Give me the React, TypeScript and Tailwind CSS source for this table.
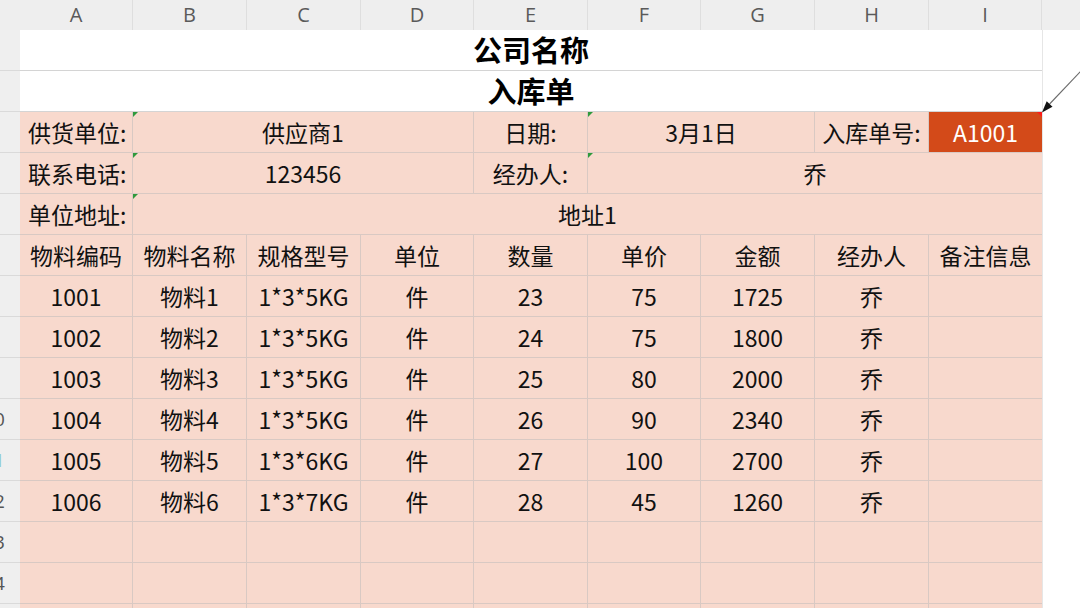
import React from "react";

const W = ["w-[113px]", "w-[114px]", "w-[114px]", "w-[113px]", "w-[114px]", "w-[113px]", "w-[114px]", "w-[114px]", "w-[113px]"];
const LETTERS = ["A", "B", "C", "D", "E", "F", "G", "H", "I"];

const SPAN: Record<number, string> = {
  1: "col-span-1",
  2: "col-span-2",
  3: "col-span-3",
  4: "col-span-4",
  8: "col-span-8",
  9: "col-span-9",
};

function Cell({
  span = 1,
  last = false,
  left = false,
  green = false,
  className = "",
  children,
}: {
  span?: number;
  last?: boolean;
  left?: boolean;
  green?: boolean;
  className?: string;
  children?: React.ReactNode;
}) {
  return (
    <div
      className={`${SPAN[span]} relative flex items-center ${left ? "justify-start pl-[8px]" : "justify-center"} border-b border-[#d9c9c3] ${last ? "" : "border-r"} bg-[#f8d9cd] text-[23px] text-[#111111] whitespace-nowrap ${className}`}
    >
      {green && (
        <span className="absolute top-0 left-0 w-0 h-0 border-t-[5px] border-r-[5px] border-t-[#2f9a3c] border-r-transparent" />
      )}
      {children}
    </div>
  );
}

const DATA = [
  ["1001", "物料1", "1*3*5KG", "件", "23", "75", "1725", "乔", ""],
  ["1002", "物料2", "1*3*5KG", "件", "24", "75", "1800", "乔", ""],
  ["1003", "物料3", "1*3*5KG", "件", "25", "80", "2000", "乔", ""],
  ["1004", "物料4", "1*3*5KG", "件", "26", "90", "2340", "乔", ""],
  ["1005", "物料5", "1*3*6KG", "件", "27", "100", "2700", "乔", ""],
  ["1006", "物料6", "1*3*7KG", "件", "28", "45", "1260", "乔", ""],
];

const HEAD = ["物料编码", "物料名称", "规格型号", "单位", "数量", "单价", "金额", "经办人", "备注信息"];

export default function App() {
  const font = { fontFamily: '"Noto Sans CJK SC", "Noto Sans", sans-serif' };
  return (
    <div className="relative w-[1080px] h-[608px] overflow-hidden bg-white" style={font}>
      {/* column header */}
      <div className="flex h-[30px] bg-[#eeeeee]">
        <div className="w-[20px] shrink-0" />
        {LETTERS.map((l, i) => (
          <div
            key={l}
            className={`${W[i]} shrink-0 flex items-center justify-center border-r border-[#dedede] text-[20px] text-[#5a5a5a]`}
            style={{ fontFamily: '"Open Sans", "Noto Sans", sans-serif' }}
          >
            {l}
          </div>
        ))}
        <div className="flex-1" />
      </div>

      <div className="flex">
        {/* row header */}
        <div className="w-[20px] shrink-0 flex flex-col bg-[#efefef]">
          {Array.from({ length: 15 }, (_, i) => i + 1).map((n) => (
            <div key={n} className="h-[41px] shrink-0 overflow-hidden border-b border-[#dadada] flex items-center">
              {n >= 10 && (
                <div
                  className={`w-[52px] shrink-0 ml-[-32px] text-center text-[19px] ${n === 11 ? "text-[#8fc9c9]" : "text-[#555555]"}`}
                  style={{ fontFamily: '"Open Sans", "Noto Sans", sans-serif' }}
                >
                  {n}
                </div>
              )}
            </div>
          ))}
        </div>

        {/* sheet grid */}
        <div className="w-[1022px] shrink-0 grid grid-cols-[113px_114px_114px_113px_114px_113px_114px_114px_113px] auto-rows-[41px]">
          <div className="col-span-9 flex items-center justify-center bg-white border-b border-[#d4d4d4] text-[29px] font-bold text-black">
            公司名称
          </div>
          <div className="col-span-9 flex items-center justify-center bg-white border-b border-[#d4d4d4] text-[29px] font-bold text-black">
            入库单
          </div>

          {/* row 3 */}
          <Cell left>供货单位:</Cell>
          <Cell span={3} green>供应商1</Cell>
          <Cell>日期:</Cell>
          <Cell span={2} green>3月1日</Cell>
          <Cell>入库单号:</Cell>
          <Cell last className="!bg-[#d34a19] !text-white">
            A1001
            <span className="absolute top-0 right-0 w-0 h-0 border-t-[5px] border-l-[5px] border-t-[#ff1a1a] border-l-transparent" />
          </Cell>

          {/* row 4 */}
          <Cell left>联系电话:</Cell>
          <Cell span={3} green>123456</Cell>
          <Cell>经办人:</Cell>
          <Cell span={4} last green>乔</Cell>

          {/* row 5 */}
          <Cell left>单位地址:</Cell>
          <Cell span={8} last green>地址1</Cell>

          {/* row 6 */}
          {HEAD.map((h, i) => (
            <Cell key={h} last={i === 8}>
              {h}
            </Cell>
          ))}

          {DATA.map((row, r) =>
            row.map((v, i) => (
              <Cell key={`${r}-${i}`} last={i === 8}>
                {v}
              </Cell>
            ))
          )}

          {[0, 1, 2].map((r) =>
            Array.from({ length: 9 }, (_, i) => <Cell key={`e${r}-${i}`} last={i === 8} />)
          )}
        </div>

        <div className="flex-1 border-l border-[#e6e6e6] bg-white" />
      </div>

      {/* comment arrow */}
      <svg className="absolute inset-0 pointer-events-none" width="1080" height="608" viewBox="0 0 1080 608">
        <line x1="1081" y1="71" x2="1049.6" y2="104" stroke="#6b6b6b" strokeWidth="1.1" />
        <polygon points="1042,112.5 1052.5,106.8 1046.7,101.2" fill="#111111" />
      </svg>
    </div>
  );
}
